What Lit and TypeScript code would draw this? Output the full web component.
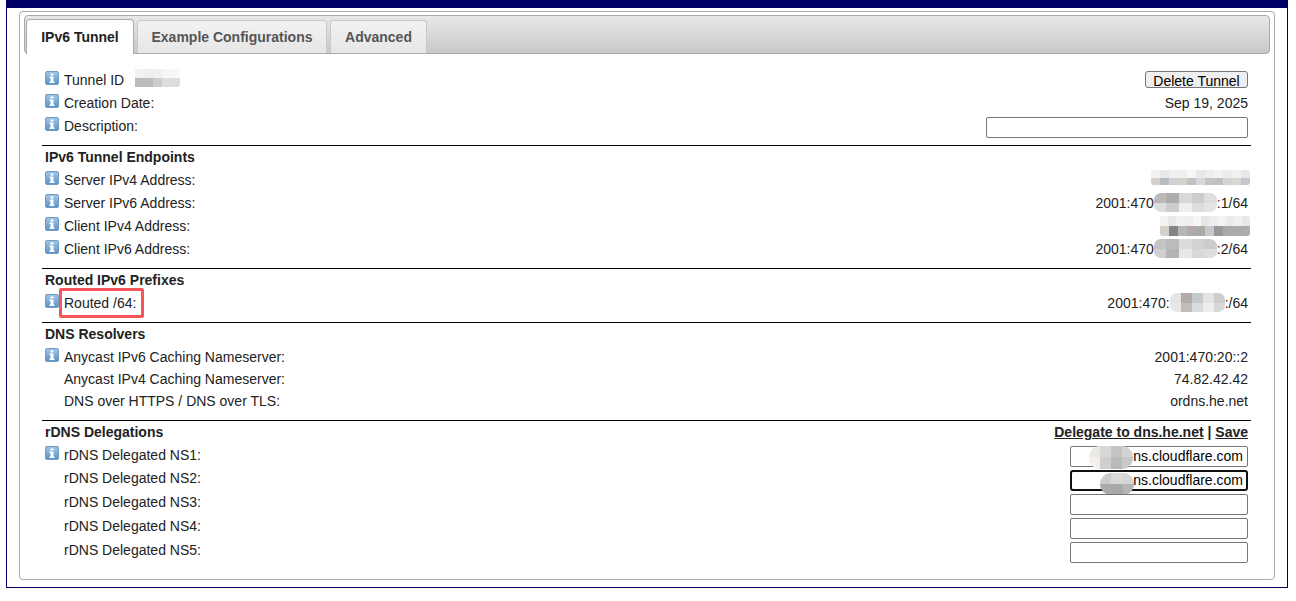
import { LitElement, html, css, svg } from "lit";
import { customElement } from "lit/decorators.js";

const pale = ["#f4f2f0", "#e6e8ea", "#f0f0f0", "#eceeef", "#f6f6f6", "#e9e7e5", "#eeeeee", "#f3f3f3", "#ebebeb", "#f1f1f1", "#e8e8e8"];
const mid = ["#d6d0ca", "#b9bcbf", "#cfd1d2", "#d5d2cc", "#bfc1c4", "#d6d9dc", "#c4c4c4", "#bfc0c2", "#d2d4d6", "#d8d6d0", "#c6c9cc"];
const dark = ["#d6d0ca", "#858585", "#b4b8bb", "#b3a9a6", "#a9a9a6", "#c4cacd", "#989898", "#a7a9ab", "#a9abad", "#adadad"];

function Mosaic(top: string[], bottom: string[], w: number, round = 3, cls = "") {
  return html`<span class="mosaic ${cls}" style="width:${w}px;border-radius:${round}px">
    <span class="mrow">${top.map((c) => html`<i style="background:${c}"></i>`)}</span>
    <span class="mrow">${bottom.map((c) => html`<i style="background:${c}"></i>`)}</span>
  </span>`;
}

const info = svg`<svg class="info" width="14" height="14" viewBox="0 0 14 14" aria-hidden="true">
  <defs><linearGradient id="ig" x1="0" y1="0" x2="0" y2="1"><stop offset="0" stop-color="#a4c6e6"/><stop offset="1" stop-color="#5a92c8"/></linearGradient></defs>
  <rect x=".5" y=".5" width="13" height="13" rx="1.5" fill="url(#ig)" stroke="#6f9bc4"/>
  <rect x="5.500" y="2.500" width="3" height="2" fill="#fff"/>
  <path d="M4.500 5.500h4v5h1v1.500h-5v-1.500h1v-3.500h-1z" fill="#fff"/>
</svg>`;

@customElement("app-root")
export class AppRoot extends LitElement {
  static styles = css`
    :host { display: block; font-family: "Liberation Sans", Arial, sans-serif; font-size: 14px; color: #222; background: #fff; }
    .outer { margin: 0 8px 13px 6px; border: 1px solid #000066; border-top: 8px solid #000066; padding: 3px 12px 7px 12px; }
    .panel { border: 1px solid #aaa; border-radius: 4px; height: 561px; padding: 3px 4px; box-sizing: content-box; }
    .tabbar { display: flex; align-items: flex-end; height: 37px; padding-left: 1px; gap: 3px; border: 1px solid #aaa; border-radius: 4px; background: linear-gradient(#e8e8e8, #c8c8c8); box-sizing: content-box; }
    .tab { display: flex; align-items: center; justify-content: center; box-sizing: border-box; height: 33px; border: 1px solid #c9c9c9; border-bottom: none; border-radius: 4px 4px 0 0; background: linear-gradient(#f2f2f2, #e6e6e6); font-weight: 700; color: #555; }
    .tab.active { height: 35px; margin-bottom: -1px; background: #fff; color: #222; border-color: #aaa; }
    .t1 { width: 108px; }
    .t2 { width: 190px; }
    .t3 { width: 97px; }
    .body { padding: 14px 22px 0 21px; }
    .sec { border-bottom: 1px solid #000; margin: 0 -3px; padding: 0 3px 8px; }
    .sec.first { padding-bottom: 7px; }
    .sec.last { border-bottom: none; }
    .head { display: flex; justify-content: space-between; align-items: center; height: 22px; font-weight: 700; }
    .head.gap { margin-bottom: 1px; }
    .head a { color: #222; text-decoration: underline; }
    .row { display: flex; justify-content: space-between; height: 23px; align-items: center; position: relative; }
    .row.h22 { height: 22px; }
    .row.h24 { height: 24px; }
    .row.h24 .val { padding-top: 2px; }
    .row.ns { height: 24px; }
    .row.ns .label { padding-bottom: 4px; }
    .row.ns.one .label { padding-bottom: 2px; }
    .label { display: flex; align-items: center; padding-left: 19px; position: relative; }
    .info { position: absolute; left: 0; top: -1px; }
    .val { display: inline-flex; align-items: center; }
    .mosaic { display: inline-flex; flex-direction: column; overflow: hidden; height: 19px; vertical-align: middle; }
    .mosaic.edge { margin-right: -2px; }
    .mosaic.s4 { height: 15px; margin-bottom: 4px; }
    .mosaic.c4 { height: 20px; }
    .mosaic.tid { height: 18px; margin: -4px 0 0 2px; }
    .mrow { display: flex; flex: 1; }
    .mrow i { flex: 1; }
    .btn { box-sizing: border-box; width: 103px; height: 17px; padding: 1px 0 0; overflow: hidden; border: 1px solid #767676; border-radius: 3px; background: #efefef; font: 14px "Liberation Sans", Arial, sans-serif; color: #000; line-height: 17px; }
    .field { box-sizing: border-box; display: block; height: 21px; width: 178px; border: 1px solid #767676; border-radius: 2px; background: #fff; font: 14px "Liberation Sans", Arial, sans-serif; color: #000; padding: 0 4px; text-align: right; line-height: 19px; position: relative; }
    .field.desc { width: 262px; }
    .field.focus { border: 2px solid #101010; border-radius: 3px; line-height: 17px; padding: 0 3px; }
    .mosaic.over { position: absolute; }
    .mosaic.over.n1 { left: 18px; top: -1px; height: 23px; }
    .mosaic.over.n2 { left: 28px; top: 1px; height: 22px; }
    .mark { position: absolute; left: 14px; top: -7px; width: 85px; height: 30px; box-sizing: border-box; border: 3px solid #f8555a; border-radius: 2px; }
  `;

  row(label: string, value: unknown = "", hasInfo = true, cls = "") {
    return html`<div class="row ${cls}">
      <span class="label">${hasInfo ? info : ""}${label}</span>
      <span class="val">${value}</span>
    </div>`;
  }

  render() {
    return html`<div class="outer"><div class="panel">
      <div class="tabbar">
        <div class="tab active t1">IPv6 Tunnel</div>
        <div class="tab t2">Example Configurations</div>
        <div class="tab t3">Advanced</div>
      </div>
      <div class="body">
        <div class="sec first">
          <div class="row">
            <span class="label">${info}Tunnel ID${Mosaic(["#ffffff", "#f2f2f2", "#eeeeee", "#f0f0f0", "#f6f6f6", "#f8f8f8"], ["#ffffff", "#bbbbbb", "#bbbbbb", "#cccccc", "#dddddd", "#dddddd"], 54, 3, "tid")}</span>
            <button class="btn">Delete Tunnel</button>
          </div>
          ${this.row("Creation Date:", "Sep 19, 2025")}
          ${this.row("Description:", html`<span class="field desc"></span>`, true, "h24")}
        </div>
        <div class="sec">
          <div class="head">IPv6 Tunnel Endpoints</div>
          ${this.row("Server IPv4 Address:", Mosaic(pale, mid, 99, 3, "edge s4"))}
          ${this.row("Server IPv6 Address:", html`2001:470${Mosaic(["#bcb8b8", "#adadad", "#d8d8d8", "#cccccc", "#dedede"], ["#dddddd", "#cccccc", "#eeeeee", "#dddddd", "#e4e4e4"], 63, 7)}:1/64`)}
          ${this.row("Client IPv4 Address:", Mosaic(pale, dark, 90, 3, "edge c4"))}
          ${this.row("Client IPv6 Address:", html`2001:470${Mosaic(["#c4c4c4", "#bbbbbb", "#dcdcdc", "#d2d2d2", "#cccccc"], ["#d0d0d0", "#b4b4b4", "#e8e8e8", "#d8d8d8", "#dddddd"], 63, 7)}:2/64`)}
        </div>
        <div class="sec">
          <div class="head">Routed IPv6 Prefixes</div>
          <div class="row">
            <span class="label">${info}Routed /64:<span class="mark"></span></span>
            <span class="val">2001:470:${Mosaic(["#e4e4e4", "#b3aaa8", "#c4cacd", "#e4e4e4", "#cccccc"], ["#e8e8e8", "#c0bcba", "#d8dcde", "#eeeeee", "#d8d8d8"], 55, 7)}:/64</span>
          </div>
        </div>
        <div class="sec">
          <div class="head gap">DNS Resolvers</div>
          ${this.row("Anycast IPv6 Caching Nameserver:", "2001:470:20::2", true, "h22")}
          ${this.row("Anycast IPv4 Caching Nameserver:", "74.82.42.42", false, "h22")}
          ${this.row("DNS over HTTPS / DNS over TLS:", "ordns.he.net", false, "h22")}
        </div>
        <div class="sec last">
          <div class="head gap">rDNS Delegations <span><a>Delegate to dns.he.net</a> | <a>Save</a></span></div>
          ${this.row("rDNS Delegated NS1:", html`<span class="field">ns.cloudflare.com${Mosaic(["#ece8e4", "#d5d7d8", "#c3c3c3", "#d2d2d2"], ["#f4efeb", "#cfcfcf", "#bababa", "#c8c8c8"], 44, 11, "over n1")}</span>`, true, "ns one")}
          ${this.row("rDNS Delegated NS2:", html`<span class="field focus">ns.cloudflare.com${Mosaic(["#cccccc", "#d8d8d8", "#d5d5d5"], ["#aaaaaa", "#a9a9a9", "#b5b5b5"], 34, 11, "over n2")}</span>`, false, "ns")}
          ${this.row("rDNS Delegated NS3:", html`<span class="field"></span>`, false, "ns")}
          ${this.row("rDNS Delegated NS4:", html`<span class="field"></span>`, false, "ns")}
          ${this.row("rDNS Delegated NS5:", html`<span class="field"></span>`, false, "ns")}
        </div>
      </div>
    </div></div>`;
  }
}
